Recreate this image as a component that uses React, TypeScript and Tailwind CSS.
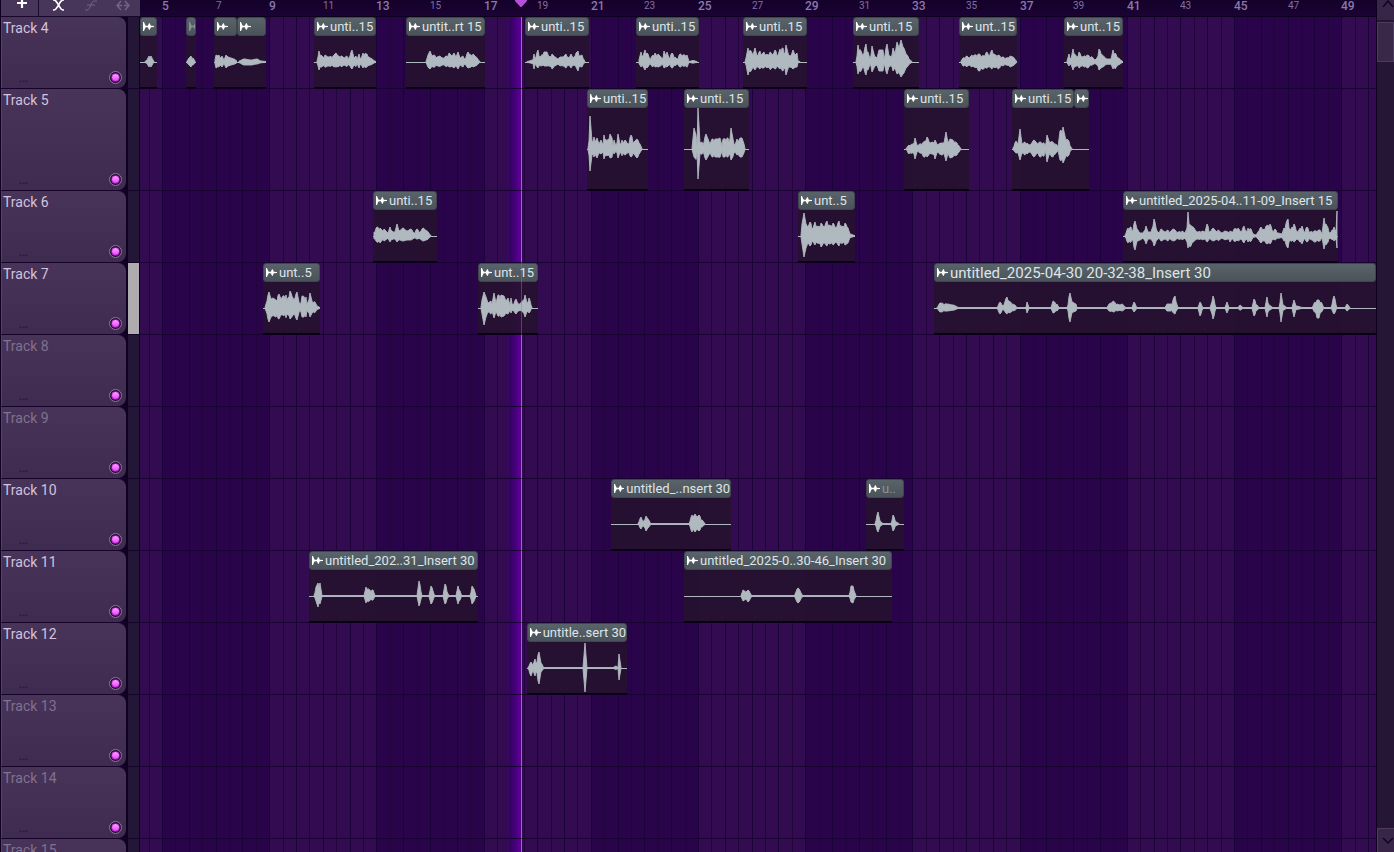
import React from "react";

type Point = number[];

type ClipData = {
  start: number;
  width: number;
  label?: string;
  long?: boolean;
  dim?: boolean;
  dimIcon?: boolean;
  // [x, above, below], below falls back to a bit less than above
  wave: Point[];
};

type Track = {
  id: number;
  tall?: boolean;
  empty?: boolean;
  selected?: boolean;
  clips: ClipData[];
};

const BAR_WIDTH = 26.8;
const FIRST_BAR_X = 22;
const PLAYHEAD_X = 381;

const tracks: Track[] = [
  {
    id: 4,
    clips: [
      { start: 0, width: 17, wave: [[5, 0.5], [7, 2], [9, 6, 5], [11, 6, 5], [13, 2], [14, 0.5]] },
      { start: 46, width: 10, dimIcon: true, wave: [[1, 1], [3, 4], [5, 6, 5], [7, 4], [9, 1]] },
      { start: 74, width: 23, wave: [[1, 2], [2, 7, 6], [4, 6], [5, 7, 5], [6, 4], [8, 6, 5], [10, 2], [12, 7, 6], [14, 5, 4], [17, 4], [20, 3], [23, 1]] },
      { start: 97, width: 29, wave: [[2, 1], [7, 3, 3], [14, 2, 3], [20, 3, 2], [24, 1], [29, 0.5]] },
      { start: 174, width: 62, label: "unti..15", wave: [[3, 1], [4, 5], [5, 11, 8], [7, 7], [9, 5, 4], [11, 7], [14, 5, 4], [19, 6], [22, 9, 5], [24, 6], [28, 6], [30, 4], [33, 6], [35, 4], [38, 12, 7], [40, 4], [42, 6], [43, 2], [45, 8, 6], [47, 3], [49, 9, 6], [53, 8, 5], [56, 4], [62, 0.5]] },
      { start: 266, width: 79, label: "untit..rt 15", wave: [[20, 0.5], [22, 7], [24, 11, 7], [26, 6], [28, 7], [31, 5], [34, 6], [36, 4], [41, 6], [43, 9, 5], [46, 6], [48, 9, 6], [50, 5], [52, 10, 7], [54, 4], [57, 6, 5], [59, 3], [62, 10, 6], [64, 7], [67, 8, 5], [70, 5], [74, 0.5]] },
      { start: 385, width: 64, label: "unti..15", wave: [[2, 0.5], [8, 2], [9, 8, 7], [10, 3], [13, 12, 6], [15, 5], [19, 10, 4], [22, 10, 4], [24, 5], [27, 8, 7], [30, 5], [33, 3], [35, 5], [38, 5], [41, 8, 6], [44, 4], [46, 8, 6], [48, 4], [51, 9, 5], [53, 11, 9], [55, 6], [57, 7, 5], [60, 0.5]] },
      { start: 496, width: 63, label: "unti..15", wave: [[3, 2], [5, 10, 5], [7, 6], [9, 12, 8], [12, 8, 5], [14, 2], [16, 6], [19, 9, 5], [21, 6], [22, 8, 5], [25, 5], [27, 4], [28, 11, 6], [30, 6], [31, 10, 5], [33, 4], [36, 9, 6], [39, 5], [41, 3], [44, 8, 5], [48, 7, 4], [51, 7], [53, 0.5], [57, 1.5], [61, 0.5]] },
      { start: 603, width: 64, label: "unti..15", wave: [[2, 0.5], [3, 4], [5, 14, 13], [8, 11, 9], [10, 7], [12, 14, 8], [14, 6], [17, 11, 7], [19, 8], [21, 10, 6], [24, 7], [27, 10], [30, 7], [32, 12, 7], [35, 7], [37, 13, 7], [40, 14, 9], [41, 8], [43, 17, 13], [45, 9], [48, 6, 5], [50, 12, 7], [52, 7], [54, 9, 5], [55, 1], [57, 0.5]] },
      { start: 713, width: 66, label: "unti..15", wave: [[3, 0.5], [4, 6], [5, 17, 12], [8, 11, 9], [10, 6], [13, 18, 13], [15, 10, 8], [17, 3], [19, 16, 10], [21, 8], [24, 4], [26, 12, 9], [30, 12, 9], [31, 3], [34, 18, 12], [36, 6], [39, 7, 5], [40, 14, 9], [42, 8], [44, 20, 12], [46, 14], [48, 22, 15], [50, 15, 12], [54, 7, 5], [57, 2], [59, 0.5]] },
      { start: 819, width: 58, label: "unt..15", wave: [[2, 1], [4, 4, 4], [8, 6], [10, 4], [13, 7, 5], [16, 7], [20, 8, 9], [24, 6, 7], [28, 10, 6], [30, 6], [33, 12, 7], [36, 7], [39, 7, 7], [43, 5], [48, 4], [51, 6, 5], [54, 5], [58, 0.5]] },
      { start: 924, width: 59, label: "unt..15", wave: [[3, 1], [5, 8, 4], [7, 3], [9, 13, 8], [12, 6, 4], [14, 5], [15, 10, 6], [18, 5], [23, 7, 6], [28, 5, 3], [31, 2], [33, 4], [35, 13, 8], [38, 7], [43, 3], [47, 3], [49, 12, 7], [51, 9], [54, 4], [59, 0.5]] },
    ],
  },
  {
    id: 5,
    tall: true,
    clips: [
      { start: 447, width: 61, label: "unti..15", wave: [[1, 1], [2, 8, 6], [3, 33, 22], [5, 8], [7, 12, 8], [8, 7], [10, 11, 9], [12, 5], [14, 9, 5], [16, 4], [17, 14, 10], [20, 8], [23, 15, 9], [25, 11], [26, 3], [27, 9, 5], [29, 3], [31, 15, 9], [33, 5], [35, 9], [36, 6], [38, 9, 6], [41, 5], [44, 14, 8], [47, 7], [50, 10, 9], [53, 5], [55, 0.5]] },
      { start: 544, width: 65, label: "unti..15", wave: [[8, 0.5], [10, 21, 8], [12, 14], [13, 4], [14, 41, 30], [16, 6], [18, 7], [19, 4], [22, 15, 11], [24, 10], [26, 5], [28, 10, 8], [34, 10, 8], [36, 11], [38, 3], [39, 10, 8], [44, 11, 8], [45, 7], [47, 21, 11], [49, 10], [51, 4], [53, 10, 6], [54, 7], [56, 11, 8], [58, 11, 8], [60, 5], [61, 0.5]] },
      { start: 764, width: 65, label: "unti..15", wave: [[2, 0.5], [5, 4, 5], [9, 5], [11, 11, 10], [13, 4], [16, 5], [20, 7, 8], [23, 12, 8], [26, 6], [29, 7], [31, 9, 10], [33, 5], [38, 6, 6], [40, 6], [42, 17, 12], [44, 6], [46, 10, 9], [49, 9, 8], [53, 6, 6], [57, 0.5]] },
      { start: 872, width: 62, label: "unti..15", wave: [[1, 1], [4, 8, 4], [6, 5], [8, 20, 11], [10, 5], [13, 7, 6], [18, 4], [22, 9, 8], [25, 6], [28, 7, 8], [32, 6, 7], [33, 3], [35, 14, 13], [37, 8], [41, 7, 8], [45, 4], [46, 2], [48, 18, 11], [51, 22, 14], [53, 13], [56, 9, 7], [60, 0.5]] },
      { start: 934, width: 15, wave: [] },
    ],
  },
  {
    id: 6,
    clips: [
      { start: 233, width: 64, label: "unti..15", wave: [[1, 4, 3], [4, 9, 6], [7, 8, 7], [9, 6], [11, 7, 5], [14, 4], [15, 3], [17, 9, 6], [20, 4], [22, 4], [24, 12, 6], [26, 5], [30, 8, 5], [34, 5, 4], [38, 7, 4], [41, 3], [44, 7, 3], [47, 4], [50, 8, 5], [54, 5], [58, 0.5]] },
      { start: 658, width: 57, label: "unt..5", wave: [[3, 1], [4, 12, 8], [6, 23, 21], [8, 12, 12], [10, 9], [12, 14, 10], [15, 8], [17, 14, 9], [20, 9], [23, 13, 11], [26, 9], [29, 15, 10], [32, 10], [35, 13, 9], [38, 8], [41, 15, 10], [44, 9], [47, 13, 9], [50, 8, 7], [52, 2], [57, 0.5]] },
      { start: 983, width: 215, label: "untitled_2025-04..11-09_Insert 15", wave: [[2, 1], [5, 8, 7], [8, 9, 6], [9, 5], [12, 15, 14], [14, 7], [17, 3, 4], [20, 3], [23, 10, 8], [25, 4], [28, 4], [31, 17, 10], [34, 5], [36, 3], [38, 7, 5], [42, 4], [45, 6, 5], [47, 4], [50, 7, 5], [55, 4], [59, 5], [62, 3], [64, 8], [65, 24, 12], [67, 11, 11], [70, 9, 6], [74, 4], [79, 5], [82, 4], [84, 12, 6], [87, 4], [90, 8, 5], [93, 5], [95, 6], [99, 3], [102, 5], [105, 4], [107, 5, 6], [109, 4], [111, 7], [115, 8, 5], [118, 4], [121, 10, 7], [124, 4], [125, 8], [128, 7], [130, 2], [133, 1], [135, 4], [138, 9, 7], [140, 6], [143, 10], [147, 12, 8], [150, 4], [152, 7, 4], [155, 3], [159, 2], [161, 8, 5], [165, 17, 12], [167, 6], [171, 12, 6], [174, 4], [179, 10, 8], [181, 4], [184, 9, 6], [187, 4], [191, 5, 6], [197, 6, 5], [199, 2], [201, 18, 13], [204, 10], [207, 3], [211, 9, 5], [213, 4], [214, 25, 12]] },
    ],
  },
  {
    id: 7,
    selected: true,
    clips: [
      { start: 123, width: 57, label: "unt..5", wave: [[2, 0.5], [3, 4], [6, 16, 14], [8, 9, 9], [10, 10], [13, 8, 9], [16, 14, 11], [18, 9], [20, 12, 7], [23, 13], [24, 8], [27, 17, 11], [30, 10], [31, 8], [34, 16, 12], [36, 6], [37, 3], [39, 12, 9], [43, 11, 9], [44, 3], [47, 15, 9], [49, 7], [52, 6], [54, 2], [57, 0.5]] },
      { start: 338, width: 60, label: "unt..15", wave: [[3, 1], [4, 8], [6, 16, 17], [8, 11, 9], [10, 5], [13, 7, 6], [14, 4], [16, 15, 10], [18, 5], [20, 13, 8], [23, 13, 9], [26, 12, 8], [28, 7], [30, 10, 6], [32, 3], [33, 10, 5], [35, 3], [38, 9, 6], [40, 4], [44, 6, 3], [47, 13, 9], [49, 5], [51, 10, 5], [54, 0.5]] },
      { start: 794, width: 442, label: "untitled_2025-04-30 20-32-38_Insert 30", long: true, wave: [[3, 0.5], [6, 5, 4], [13, 4, 3], [19, 3], [25, 0.5], [63, 0.5], [66, 6, 6], [69, 2], [73, 11, 6], [76, 6], [81, 3], [83, 0.5], [92, 0.5], [93, 6, 5], [95, 0.5], [117, 0.5], [119, 7, 5], [123, 4], [125, 0.5], [133, 0.5], [136, 15, 14], [138, 6], [142, 4], [143, 0.5], [173, 0.5], [175, 4], [179, 7, 4], [183, 4], [186, 3], [188, 4], [192, 0.5], [198, 0.5], [200, 6, 4], [203, 0.5], [231, 0.5], [233, 4], [237, 4], [241, 12, 6], [244, 0.5], [264, 0.5], [266, 6, 8], [269, 0.5], [276, 0.5], [279, 12, 11], [282, 0.5], [291, 0.5], [293, 6, 5], [295, 0.5], [304, 0.5], [306, 3], [309, 0.5], [318, 0.5], [320, 9, 8], [323, 3], [325, 0.5], [331, 0.5], [333, 11, 9], [335, 3], [339, 0.5], [345, 0.5], [347, 15, 14], [349, 3], [353, 0.5], [358, 0.5], [360, 8, 9], [362, 2], [369, 0.5], [378, 0.5], [381, 6], [383, 8, 10], [385, 8, 10], [387, 6], [390, 0.5], [397, 0.5], [400, 12, 6], [403, 0.5], [411, 0.5], [413, 4], [416, 0.5]] },
    ],
  },
  { id: 8, empty: true, clips: [] },
  { id: 9, empty: true, clips: [] },
  {
    id: 10,
    clips: [
      { start: 471, width: 120, label: "untitled_..nsert 30", wave: [[27, 0.5], [30, 7, 5], [32, 2], [35, 8, 7], [37, 5], [40, 0.5], [78, 0.5], [81, 9, 8], [82, 7], [84, 10, 8], [86, 7], [88, 9, 7], [91, 4], [94, 0.5]] },
      { start: 726, width: 38, label: "u..", dim: true, wave: [[9, 0.5], [12, 12, 8], [14, 3], [17, 0.5], [25, 0.5], [27, 9, 7], [30, 2], [33, 0.5]] },
    ],
  },
  {
    id: 11,
    clips: [
      { start: 169, width: 169, label: "untitled_202..31_Insert 30", wave: [[5, 0.5], [7, 9, 5], [9, 13, 11], [11, 13, 8], [13, 0.5], [55, 0.5], [57, 9, 7], [61, 6], [64, 6, 4], [66, 0.5], [108, 0.5], [110, 15, 10], [113, 0.5], [120, 0.5], [122, 10, 8], [126, 0.5], [134, 0.5], [136, 12, 8], [140, 0.5], [147, 0.5], [149, 10, 8], [153, 0.5], [161, 0.5], [163, 10, 8], [165, 7], [167, 0.5]] },
      { start: 544, width: 208, label: "untitled_2025-0..30-46_Insert 30", wave: [[57, 0.5], [59, 6, 5], [62, 4], [64, 6, 6], [68, 0.5], [110, 0.5], [114, 8, 7], [119, 0.5], [165, 0.5], [167, 10, 6], [169, 10, 7], [172, 0.5]] },
    ],
  },
  {
    id: 12,
    clips: [
      { start: 387, width: 100, label: "untitle..sert 30", wave: [[1, 0.5], [4, 6, 8], [6, 3], [8, 9, 8], [9, 5], [12, 16, 16], [14, 5], [17, 0.5], [56, 0.5], [58, 25, 24], [60, 0.5], [86, 0.5], [89, 2], [91, 0.5], [92, 14, 12], [94, 0.5]] },
    ],
  },
  { id: 13, empty: true, clips: [] },
  { id: 14, empty: true, clips: [] },
  { id: 15, empty: true, clips: [] },
];

const barX = (bar: number) => Math.round(FIRST_BAR_X + (bar - 5) * BAR_WIDTH);

const phrases = [1, 5, 9, 13, 17, 21, 25, 29, 33, 37, 41, 45, 49];
const halfBars = Array.from({ length: 94 }, (_, i) => 4.5 + i / 2);
const rulerBars = Array.from({ length: 23 }, (_, i) => 5 + i * 2);

// one sample per pixel: eased between the points, with a notch every few samples
function sampleWave(wave: Point[]) {
  const samples: Point[] = [];
  wave.slice(0, -1).forEach(([x, up, down = up * 0.75], i) => {
    const [nextX, nextUp, nextDown = nextUp * 0.75] = wave[i + 1];
    for (let px = x; px < nextX; px++) {
      const t = (px - x) / (nextX - x);
      const ease = t * t * (3 - 2 * t);
      const level = up + (nextUp - up) * ease;
      const notch = px !== x && px % 4 === 2 && level > 4 ? 0.72 : 1;
      samples.push([px, level * notch, (down + (nextDown - down) * ease) * notch]);
    }
  });
  const [x, up, down = up * 0.75] = wave[wave.length - 1];
  samples.push([x, up, down]);
  return samples;
}

function ClipIcon({ dim }: { dim?: boolean }) {
  return (
    <svg width="11" height="9" viewBox="0 0 11 9" className={dim ? "shrink-0 text-[#8a9398]" : "shrink-0 text-white"}>
      <path
        d="M0 0h1l1 2.500.8 1.300h2l1.200-2.600h.8l1 2.600L11 4v1l-3.200.2-1 2.600H6L4.800 5.200h-2L2 6.500 1 9H0z"
        fill="currentColor"
      />
    </svg>
  );
}

function Waveform({ wave, width }: { wave: Point[]; width: number }) {
  const samples = wave.length > 0 ? sampleWave(wave) : [];
  const top = samples.map(([x, up]) => `${x},${-up}`);
  const bottom = samples.map(([x, , down]) => `${x},${down}`).reverse();

  return (
    <svg width={width} height="82" viewBox={`0 -41 ${width} 82`} className="shrink-0">
      <rect x="0" y="0" width={width} height="1" fill="#b0b9bf" />
      {samples.length > 0 && (
        <polygon
          points={[...top, ...bottom].join(" ")}
          fill="#b0b9bf"
          stroke="#b0b9bf"
          strokeWidth="0.9"
          strokeLinejoin="round"
        />
      )}
    </svg>
  );
}

function Clip({ clip }: { clip: ClipData }) {
  return (
    <div className="absolute inset-y-0 flex flex-col" style={{ left: clip.start, width: clip.width }}>
      <div className="flex h-[19px] shrink-0 items-center gap-0.5 rounded-[3px] border border-[#3d474c] bg-gradient-to-b from-[#59636a] to-[#4a5359] pl-0.5">
        <span className="flex min-w-0 shrink overflow-hidden">
          <ClipIcon dim={clip.dimIcon} />
        </span>
        {clip.label && (
          <span
            className={`whitespace-nowrap leading-4 ${clip.dim ? "text-[#8b9499]" : "text-[#dfe4e8]"} ${
              clip.long ? "text-[15px]" : "text-[13px]"
            }`}
          >
            {clip.label}
          </span>
        )}
      </div>
      <div className="flex min-h-0 flex-1 items-center overflow-hidden bg-[#26122d]/88 shadow-[inset_0_-1px_0_#0c0018,0_1px_0_#0c0018]">
        <Waveform wave={clip.wave} width={clip.width} />
      </div>
    </div>
  );
}

function TrackHeader({ track }: { track: Track }) {
  return (
    <div className={`flex shrink-0 border-b border-[#15032b] ${track.tall ? "h-[102px]" : "h-[72px]"}`}>
      <div className="flex min-w-0 flex-1 flex-col justify-between rounded-r-lg border-l border-[#554268] bg-gradient-to-b from-[#483458] to-[#3e2b4f] pl-px">
        <span className={`text-[14px] leading-[22px] ${track.empty ? "text-[#827090]" : "text-[#d3c2df]"}`}>
          Track {track.id}
        </span>
        <div className="flex items-end justify-between pr-1 pb-1">
          <span className="pl-4 text-[12px] leading-3 text-[#20102f]">...</span>
          <button
            aria-label={`Mute track ${track.id}`}
            className="flex size-[13px] items-center justify-center rounded-full border border-[#8b7b98] bg-[#2b0838]"
          >
            <span className="size-[9px] rounded-full border border-[#9b18b8] bg-gradient-to-b from-[#ffa0ff] to-[#e040f0]" />
          </button>
        </div>
      </div>
      <div
        className={`ml-0.5 w-3 border-r border-[#0f001f] ${track.selected ? "bg-[#aeacae]" : "bg-[#231637]"}`}
      />
    </div>
  );
}

function Toolbar() {
  return (
    <div className="flex h-[17px] shrink-0 items-start overflow-hidden border-b border-[#180829] bg-[#48355a] text-white">
      <button aria-label="Add" className="flex h-4 w-[38px] items-start justify-center border-r border-[#1c0c2c] pl-1">
        <svg width="12" height="10" viewBox="0 0 12 10">
          <path d="M6 0v8M1 3h10" stroke="currentColor" strokeWidth="2.200" />
        </svg>
      </button>
      <button aria-label="Cross fade" className="flex h-4 w-9 justify-center pl-0.5">
        <svg width="13" height="12" viewBox="0 0 13 12">
          <path
            d="M1 0h1c2 0 2.500 2 4.500 5s2.500 5 4.500 5h1M12 0h-1C9 0 8.500 2 6.500 5S4 10 2 10H1"
            fill="none"
            stroke="currentColor"
            strokeWidth="1.700"
          />
        </svg>
      </button>
      <button aria-label="Slope" className="flex h-4 w-8 justify-center text-[#75638a]">
        <svg width="14" height="12" viewBox="0 0 14 12">
          <path d="M1 10h2c4 0 3-9 8-9h2M3 5h8" fill="none" stroke="currentColor" />
        </svg>
      </button>
      <button aria-label="Stretch" className="flex h-4 w-8 justify-center text-[#75638a]">
        <svg width="14" height="12" viewBox="0 0 14 12">
          <path d="M5 1L1 5.500l4 4.500M9 1l4 4.500L9 10M1 5.500h5M8 5.500h5" fill="none" stroke="currentColor" strokeWidth="1.400" />
        </svg>
      </button>
    </div>
  );
}

function Ruler() {
  return (
    <div className="relative h-[17px] shrink-0 overflow-hidden border-b border-[#0d001b] bg-gradient-to-b from-[#14012a] to-[#1b0433]">
      {rulerBars.map((bar) => (
        <span
          key={bar}
          className={`absolute top-0 leading-3 ${
            bar % 4 === 1 ? "text-[12px] font-medium text-[#8b78ac]" : "text-[10px] text-[#8270a4]"
          }`}
          style={{ left: barX(bar) }}
        >
          {bar}
        </span>
      ))}
      <svg width="12" height="7" viewBox="0 0 12 7" className="absolute top-0" style={{ left: PLAYHEAD_X - 6 }}>
        <path d="M0 0h12v1L6.500 7h-1L0 1z" fill="#b650dc" />
      </svg>
    </div>
  );
}

function Timeline() {
  return (
    <div className="relative min-h-0 flex-1 overflow-hidden bg-[#2a044a]">
      {phrases
        .filter((_, i) => i % 2 === 0)
        .map((bar) => (
          <div
            key={bar}
            className="absolute inset-y-0 bg-[#330b50]"
            style={{ left: barX(bar), width: barX(bar + 4) - barX(bar) }}
          />
        ))}
      {halfBars.map((bar) => (
        <div
          key={bar}
          className={`absolute inset-y-0 w-px ${bar % 1 === 0 ? "bg-[#1a0338]" : "bg-[#22053d]"}`}
          style={{ left: barX(bar) }}
        />
      ))}
      <div
        className="absolute inset-y-0 w-4 bg-gradient-to-r from-transparent via-[#3d0070] to-[#5c0099]"
        style={{ left: PLAYHEAD_X - 16 }}
      />
      <div className="absolute inset-y-0 w-px bg-[#b457e0]" style={{ left: PLAYHEAD_X }} />
      <div className="relative flex flex-col">
        {tracks.map((track) => (
          <div
            key={track.id}
            className={`relative shrink-0 border-b border-[#180333] ${track.tall ? "h-[102px]" : "h-[72px]"}`}
          >
            {track.clips.map((clip) => (
              <Clip key={clip.start} clip={clip} />
            ))}
          </div>
        ))}
      </div>
      <div className="absolute inset-y-0 w-px bg-[#b457e0]/40" style={{ left: PLAYHEAD_X }} />
    </div>
  );
}

function Scrollbar() {
  return (
    <div className="flex w-[18px] shrink-0 flex-col border-l border-[#0f001f] bg-[#251636]">
      <button aria-label="Scroll up" className="flex h-5 items-start justify-center bg-[#382548] text-[#120520]">
        <svg width="12" height="8" viewBox="0 0 12 8" className="ml-1">
          <path d="M1 7l5-6 5 6" fill="none" stroke="currentColor" strokeWidth="1.500" />
        </svg>
      </button>
      <div className="mt-0.5 h-10 border border-[#4d3c5e] bg-[#3a2849]" />
      <div className="flex-1" />
      <button
        aria-label="Scroll down"
        className="flex h-6 items-center justify-center border-t border-l border-[#4d3c5e] bg-[#382548] text-[#120520]"
      >
        <svg width="12" height="8" viewBox="0 0 12 8" className="ml-1">
          <path d="M1 1l5 5 5-5" fill="none" stroke="currentColor" strokeWidth="1.500" />
        </svg>
      </button>
    </div>
  );
}

export default function App() {
  return (
    <main className="flex h-screen overflow-hidden bg-[#0f001f] font-['Roboto','Noto_Sans',sans-serif]">
      <aside className="flex w-[140px] shrink-0 flex-col overflow-hidden pl-px">
        <Toolbar />
        {tracks.map((track) => (
          <TrackHeader key={track.id} track={track} />
        ))}
      </aside>
      <section className="flex min-w-0 flex-1 flex-col">
        <Ruler />
        <Timeline />
      </section>
      <Scrollbar />
    </main>
  );
}
